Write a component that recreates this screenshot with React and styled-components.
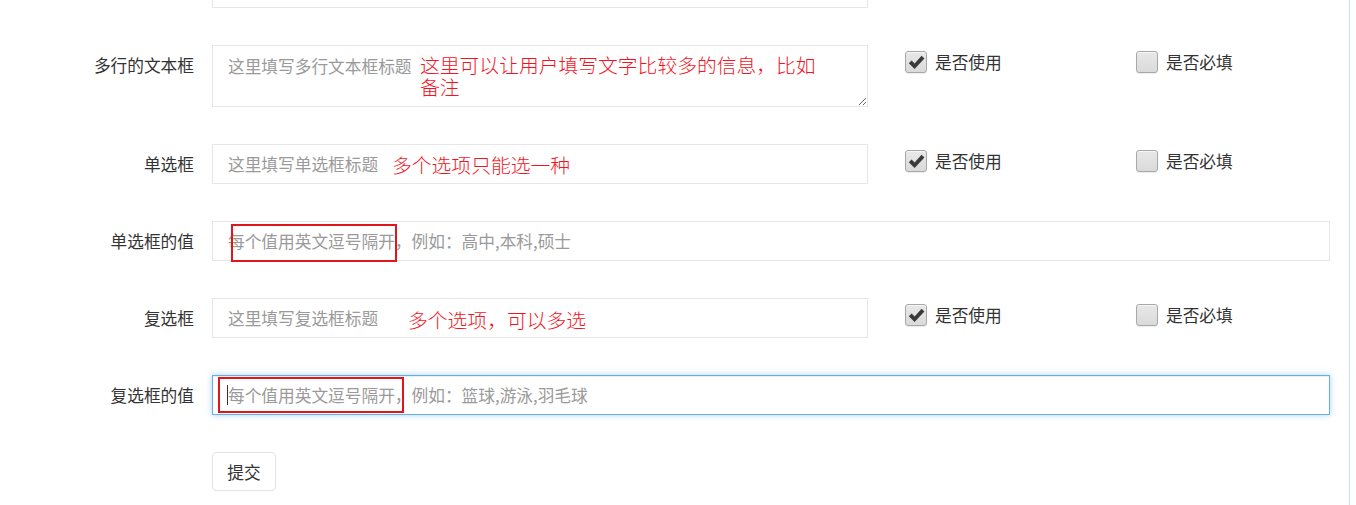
import React from "react";
import styled, { createGlobalStyle } from "styled-components";

const Global = createGlobalStyle`
  html, body { margin: 0; padding: 0; background: #fff; }
  body { font-family: "Noto Sans CJK SC", "Noto Sans", sans-serif; color: #333; }
  * { box-sizing: border-box; }
`;

const Page = styled.div`
  width: 1350px;
  height: 100vh;
  overflow: hidden;
  border-right: 1px solid #c4e3ec;
`;

const Form = styled.div`
  margin-top: -32px;
  display: flex;
  flex-direction: column;
  gap: 37px;
`;

const Row = styled.div`
  display: flex;
  align-items: flex-start;
`;

const Label = styled.div`
  flex: none;
  width: 194px;
  margin-right: 18px;
  text-align: right;
  font-size: 16.7px;
  line-height: 40px;
  color: #333;
  white-space: nowrap;
`;

const Field = styled.div`
  position: relative;
  width: ${(p) => p.$w}px;
  flex: none;
`;

const inputBase = `
  display: block;
  width: 100%;
  border: 1px solid #e6e6e6;
  background: #fff;
  border-radius: 0;
  padding: 0 15px;
  font-family: "Noto Sans CJK SC", "Noto Sans", sans-serif;
  font-size: 16.7px;
  color: #333;
  outline: none;
  &::placeholder { color: #9a9a9a; opacity: 1; }
`;

const TextInput = styled.input`
  ${inputBase}
  height: 40px;
  ${(p) =>
    p.$focus &&
    `border-color: #66afe9;
     box-shadow: inset 0 1px 1px rgba(0,0,0,.075), 0 0 6px rgba(102,175,233,.55);`}
`;

const TextArea = styled.textarea`
  ${inputBase}
  height: 62px;
  padding: 10px 15px;
  line-height: 20px;
  resize: vertical;
`;

const Note = styled.div`
  position: absolute;
  left: ${(p) => p.$x}px;
  top: ${(p) => p.$y}px;
  width: ${(p) => p.$w || 420}px;
  color: #f2141e;
  font-family: "Noto Sans CJK SC", sans-serif;
  font-weight: 300;
  font-size: 19.8px;
  line-height: 22px;
  pointer-events: none;
`;

const Mark = styled.div`
  position: absolute;
  left: ${(p) => p.$x}px;
  top: ${(p) => p.$y}px;
  width: ${(p) => p.$w}px;
  height: ${(p) => p.$h}px;
  border: 2px solid #e0161b;
  pointer-events: none;
`;

const Caret = styled.div`
  position: absolute;
  left: 15px;
  top: 10px;
  width: 1px;
  height: 20px;
  background: #333;
`;

const Options = styled.div`
  flex: none;
  display: flex;
  margin-left: 37px;
  padding-top: 6px;
`;

const Option = styled.label`
  width: ${(p) => (p.$last ? "auto" : "231px")};
  display: flex;
  align-items: center;
  gap: 8px;
  font-size: 16.7px;
  line-height: 22px;
  color: #333;
`;

const Box = styled.span`
  width: 22px;
  height: 22px;
  flex: none;
  border: 1px solid #a8a8a8;
  border-radius: 3px;
  background: linear-gradient(#e8e8e8, #dadada);
  box-shadow: inset 0 1px 0 rgba(255,255,255,.6), 0 1px 1px rgba(0,0,0,.08);
  display: flex;
  align-items: center;
  justify-content: center;
`;

const Button = styled.button`
  margin-left: 212px;
  width: 64px;
  height: 39px;
  border: 1px solid #e3e3e3;
  border-radius: 4px;
  background: #fff;
  font-family: "Noto Sans CJK SC", sans-serif;
  font-size: 16.7px;
  color: #333;
  padding: 0;
`;

const Check = ({ on }) => (
  <Box>
    {on && (
      <svg width="17" height="15" viewBox="0 0 17 15">
        <path d="M0.8 8.2 L3.6 5.5 L6.6 8.6 L13.6 0.8 L16.4 3.6 L6.6 14 Z" fill="#3a3a3a" />
      </svg>
    )}
  </Box>
);

const Opts = () => (
  <Options>
    <Option>
      <Check on />
      是否使用
    </Option>
    <Option $last>
      <Check />
      是否必填
    </Option>
  </Options>
);

export default function App() {
  return (
    <>
      <Global />
      <Page>
        <Form>
          <Row>
            <Label />
            <Field $w={656}>
              <TextInput readOnly />
            </Field>
          </Row>

          <Row>
            <Label>多行的文本框</Label>
            <Field $w={656}>
              <TextArea placeholder="这里填写多行文本框标题" />
              <Note $x={208} $y={9} $w={410}>
                这里可以让用户填写文字比较多的信息，比如备注
              </Note>
            </Field>
            <Opts />
          </Row>

          <Row>
            <Label>单选框</Label>
            <Field $w={656}>
              <TextInput placeholder="这里填写单选框标题" />
              <Note $x={180} $y={10}>多个选项只能选一种</Note>
            </Field>
            <Opts />
          </Row>

          <Row>
            <Label>单选框的值</Label>
            <Field $w={1118}>
              <TextInput placeholder="每个值用英文逗号隔开，例如：高中,本科,硕士" />
              <Mark $x={19} $y={3} $w={166} $h={38} />
            </Field>
          </Row>

          <Row>
            <Label>复选框</Label>
            <Field $w={656}>
              <TextInput placeholder="这里填写复选框标题" />
              <Note $x={196} $y={11}>多个选项，可以多选</Note>
            </Field>
            <Opts />
          </Row>

          <Row>
            <Label>复选框的值</Label>
            <Field $w={1118}>
              <TextInput $focus placeholder="每个值用英文逗号隔开，例如：篮球,游泳,羽毛球" />
              <Caret />
              <Mark $x={6} $y={2} $w={186} $h={36} />
            </Field>
          </Row>

          <Row>
            <Button>提交</Button>
          </Row>
        </Form>
      </Page>
    </>
  );
}
